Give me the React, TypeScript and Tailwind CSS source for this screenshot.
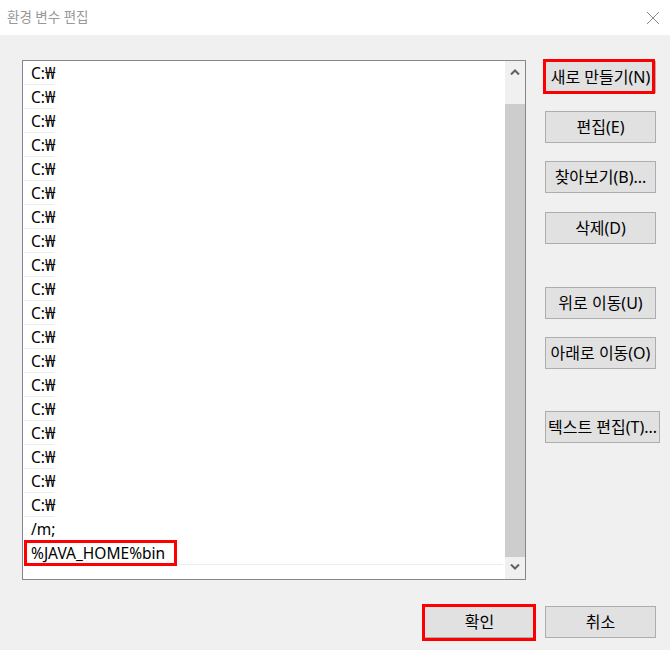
import React from "react";

const FONT = { fontFamily: '"Noto Sans", "Noto Sans CJK KR", sans-serif' };

function Btn({ label, className = "" }: { label: string; className?: string }) {
  return (
    <div
      className={`h-[32px] bg-[#e1e1e1] border border-[#adadad] flex items-center justify-center text-[16px] text-black whitespace-nowrap ${className}`}
    >
      {label}
    </div>
  );
}

function Chevron({ up }: { up?: boolean }) {
  return (
    <svg width="10" height="6" viewBox="0 0 10 6">
      <polyline
        points={up ? "1,5.5 5,1.5 9,5.5" : "1,0.5 5,4.5 9,0.5"}
        fill="none"
        stroke="#606060"
        strokeWidth="2"
      />
    </svg>
  );
}

export default function App() {
  const rows: string[] = [];
  for (let i = 0; i < 19; i++) rows.push("C:₩");
  rows.push("/m;");
  rows.push("%JAVA_HOME%bin");

  return (
    <div className="w-[670px] h-[650px] bg-[#f0f0f0] flex flex-col overflow-hidden" style={FONT}>
      {/* title bar */}
      <div className="h-[35px] bg-white flex items-center justify-between shrink-0">
        <span className="ml-[7px] text-[13.5px] text-[#999999]">환경 변수 편집</span>
        <svg width="14" height="14" viewBox="0 0 14 14" className="mr-[10px]">
          <path d="M1 1 L13 13 M13 1 L1 13" stroke="#8a8a8a" strokeWidth="1" />
        </svg>
      </div>

      <div className="flex">
        {/* list box */}
        <div className="ml-[22px] mt-[25px] w-[504px] h-[520px] border border-[#828790] bg-white flex">
          <div className="flex-1 flex flex-col">
            {rows.map((r, i) => {
              const last = i === rows.length - 1;
              return (
                <div key={i} className="relative h-[24px] shrink-0">
                  <div className="h-[23px] flex items-center pl-[8px] pt-[2px] text-[15.5px] text-black whitespace-nowrap">
                    {r}
                  </div>
                  <div
                    className={`h-[1px] bg-[#ececec] ml-[1px] ${last ? "mr-[2px]" : "w-[30px]"}`}
                  />
                  {last && (
                    <div className="absolute left-[1px] top-[-1px] w-[153px] h-[26px] border-[3px] border-[#ff0000]" />
                  )}
                </div>
              );
            })}
          </div>
          {/* scrollbar */}
          <div className="w-[20px] bg-[#f0f0f0] flex flex-col">
            <div className="h-[43px] flex justify-center pt-[8px]">
              <Chevron up />
            </div>
            <div className="flex-1 bg-[#cdcdcd]" />
            <div className="h-[22px] flex justify-center pt-[7px]">
              <Chevron />
            </div>
          </div>
        </div>

        {/* right buttons */}
        <div className="ml-[19px] mt-[25px] flex flex-col">
          <div className="relative mt-[1px]">
            <Btn label="새로 만들기(N)" className="w-[111px]" />
            <div className="absolute left-[-2px] top-[-2px] w-[112px] h-[35px] border-[3px] border-[#ff0000]" />
          </div>
          <Btn label="편집(E)" className="w-[111px] mt-[18px]" />
          <Btn label="찾아보기(B)..." className="w-[111px] mt-[18px]" />
          <Btn label="삭제(D)" className="w-[111px] mt-[19px]" />
          <Btn label="위로 이동(U)" className="w-[111px] mt-[43px]" />
          <Btn label="아래로 이동(O)" className="w-[111px] mt-[18px]" />
          <Btn label="텍스트 편집(T)..." className="w-[115px] mt-[42px]" />
        </div>
      </div>

      {/* bottom buttons */}
      <div className="flex mt-[26px] ml-[424px] gap-[10px]">
        <div className="relative">
          <Btn label="확인" className="w-[111px]" />
          <div className="absolute left-[-2px] top-[-2px] w-[114px] h-[37px] border-[3px] border-[#ff0000]" />
        </div>
        <Btn label="취소" className="w-[111px]" />
      </div>
    </div>
  );
}
